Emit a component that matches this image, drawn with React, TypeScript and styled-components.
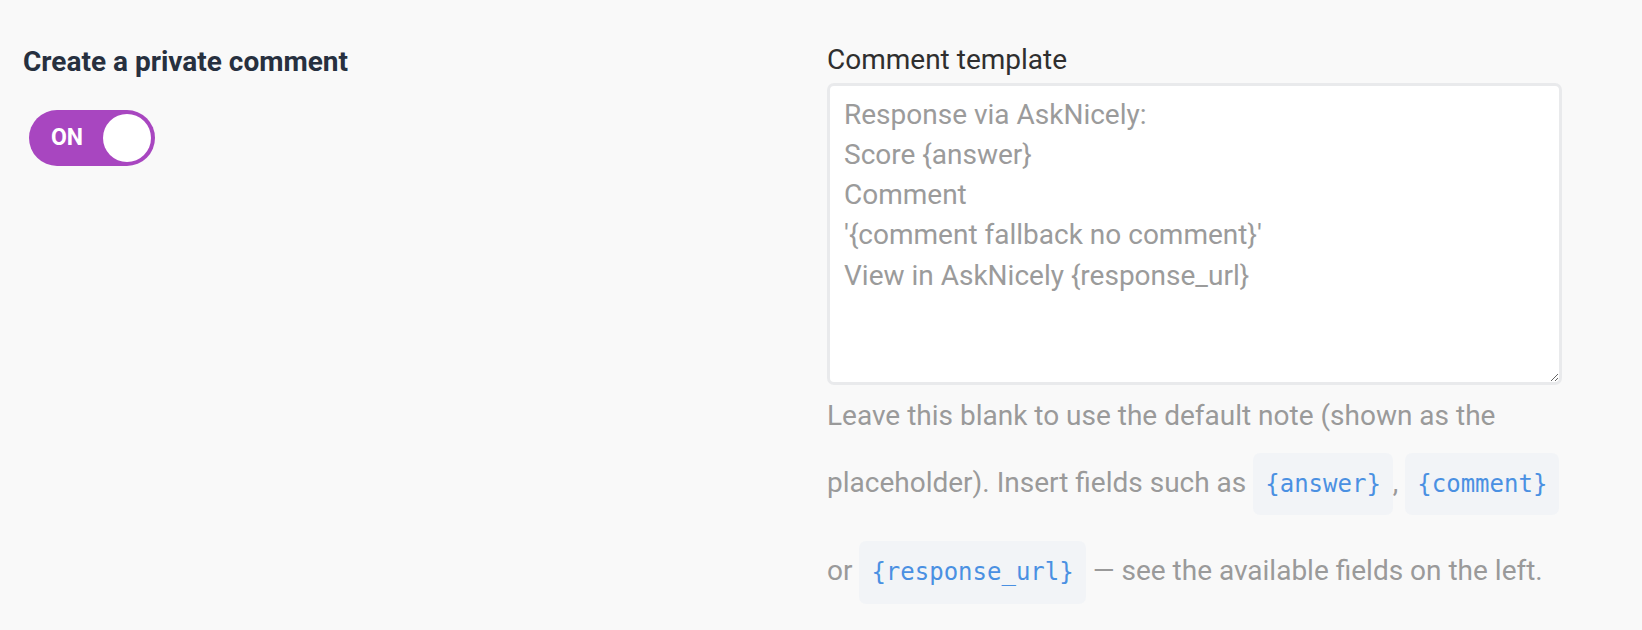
import styled, { createGlobalStyle } from 'styled-components'

const GlobalStyle = createGlobalStyle`
  body {
    margin: 0;
    background: #f9f9f9;
    font-family: Roboto, 'Liberation Sans', sans-serif;
  }
`

const placeholderText = [
  'Response via AskNicely:',
  'Score {answer}',
  'Comment',
  "'{comment fallback no comment}'",
  'View in AskNicely {response_url}',
].join('\n')

export default function App() {
  return (
    <Page>
      <GlobalStyle />
      <Column>
        <Title>Create a private comment</Title>
        <Toggle type="button" aria-pressed="true">
          <ToggleLabel>ON</ToggleLabel>
          <Knob />
        </Toggle>
      </Column>
      <Column>
        <FieldLabel htmlFor="comment-template">Comment template</FieldLabel>
        <TemplateInput id="comment-template" placeholder={placeholderText} />
        <Help>
          Leave this blank to use the default note (shown as the placeholder). Insert fields such as{' '}
          <Field>{'{answer}'}</Field>, <Field>{'{comment}'}</Field> or <Field>{'{response_url}'}</Field> — see the
          available fields on the left.
        </Help>
      </Column>
    </Page>
  )
}

const Page = styled.main`
  display: grid;
  grid-template-columns: 804px 735px;
  padding: 45px 0 0 23px;
`

const Column = styled.section`
  display: flex;
  flex-direction: column;
  align-items: flex-start;
`

const Title = styled.h2`
  margin: 0;
  font-size: 28px;
  line-height: 1.2;
  font-weight: 700;
  color: #27303f;
`

const Toggle = styled.button`
  display: flex;
  align-items: center;
  justify-content: space-between;
  box-sizing: border-box;
  width: 126px;
  height: 56px;
  margin: 31px 0 0 6px;
  padding: 0 4px 0 22px;
  border: none;
  border-radius: 28px;
  background: #a846c0;
  cursor: pointer;
`

const ToggleLabel = styled.span`
  font-family: Roboto, sans-serif;
  font-size: 23px;
  font-weight: 700;
  color: #ffffff;
`

const Knob = styled.span`
  width: 48px;
  height: 48px;
  border-radius: 50%;
  background: #ffffff;
`

const FieldLabel = styled.label`
  margin: 0 0 7px;
  font-size: 28px;
  line-height: 1.1;
  color: #2f2f2f;
`

const TemplateInput = styled.textarea`
  box-sizing: border-box;
  width: 735px;
  height: 302px;
  padding: 9px 14px 6px;
  border: 3px solid #e9eaec;
  border-radius: 7px;
  background: #ffffff;
  font-family: Roboto, sans-serif;
  font-size: 28px;
  line-height: 40.2px;
  color: #333;
  outline: none;

  &::placeholder {
    color: #9b9b9b;
  }
`

const Help = styled.p`
  margin: 7px 0 0;
  width: 745px;
  font-size: 28px;
  line-height: 47.8px;
  color: #9a9a9a;
`

const Field = styled.code`
  display: inline-block;
  margin: 13px 0;
  padding: 10px 12px;
  border-radius: 7px;
  background: #f2f4f7;
  font-family: 'DejaVu Sans Mono', monospace;
  font-size: 24px;
  line-height: 42.5px;
  color: #4a90e2;
`
